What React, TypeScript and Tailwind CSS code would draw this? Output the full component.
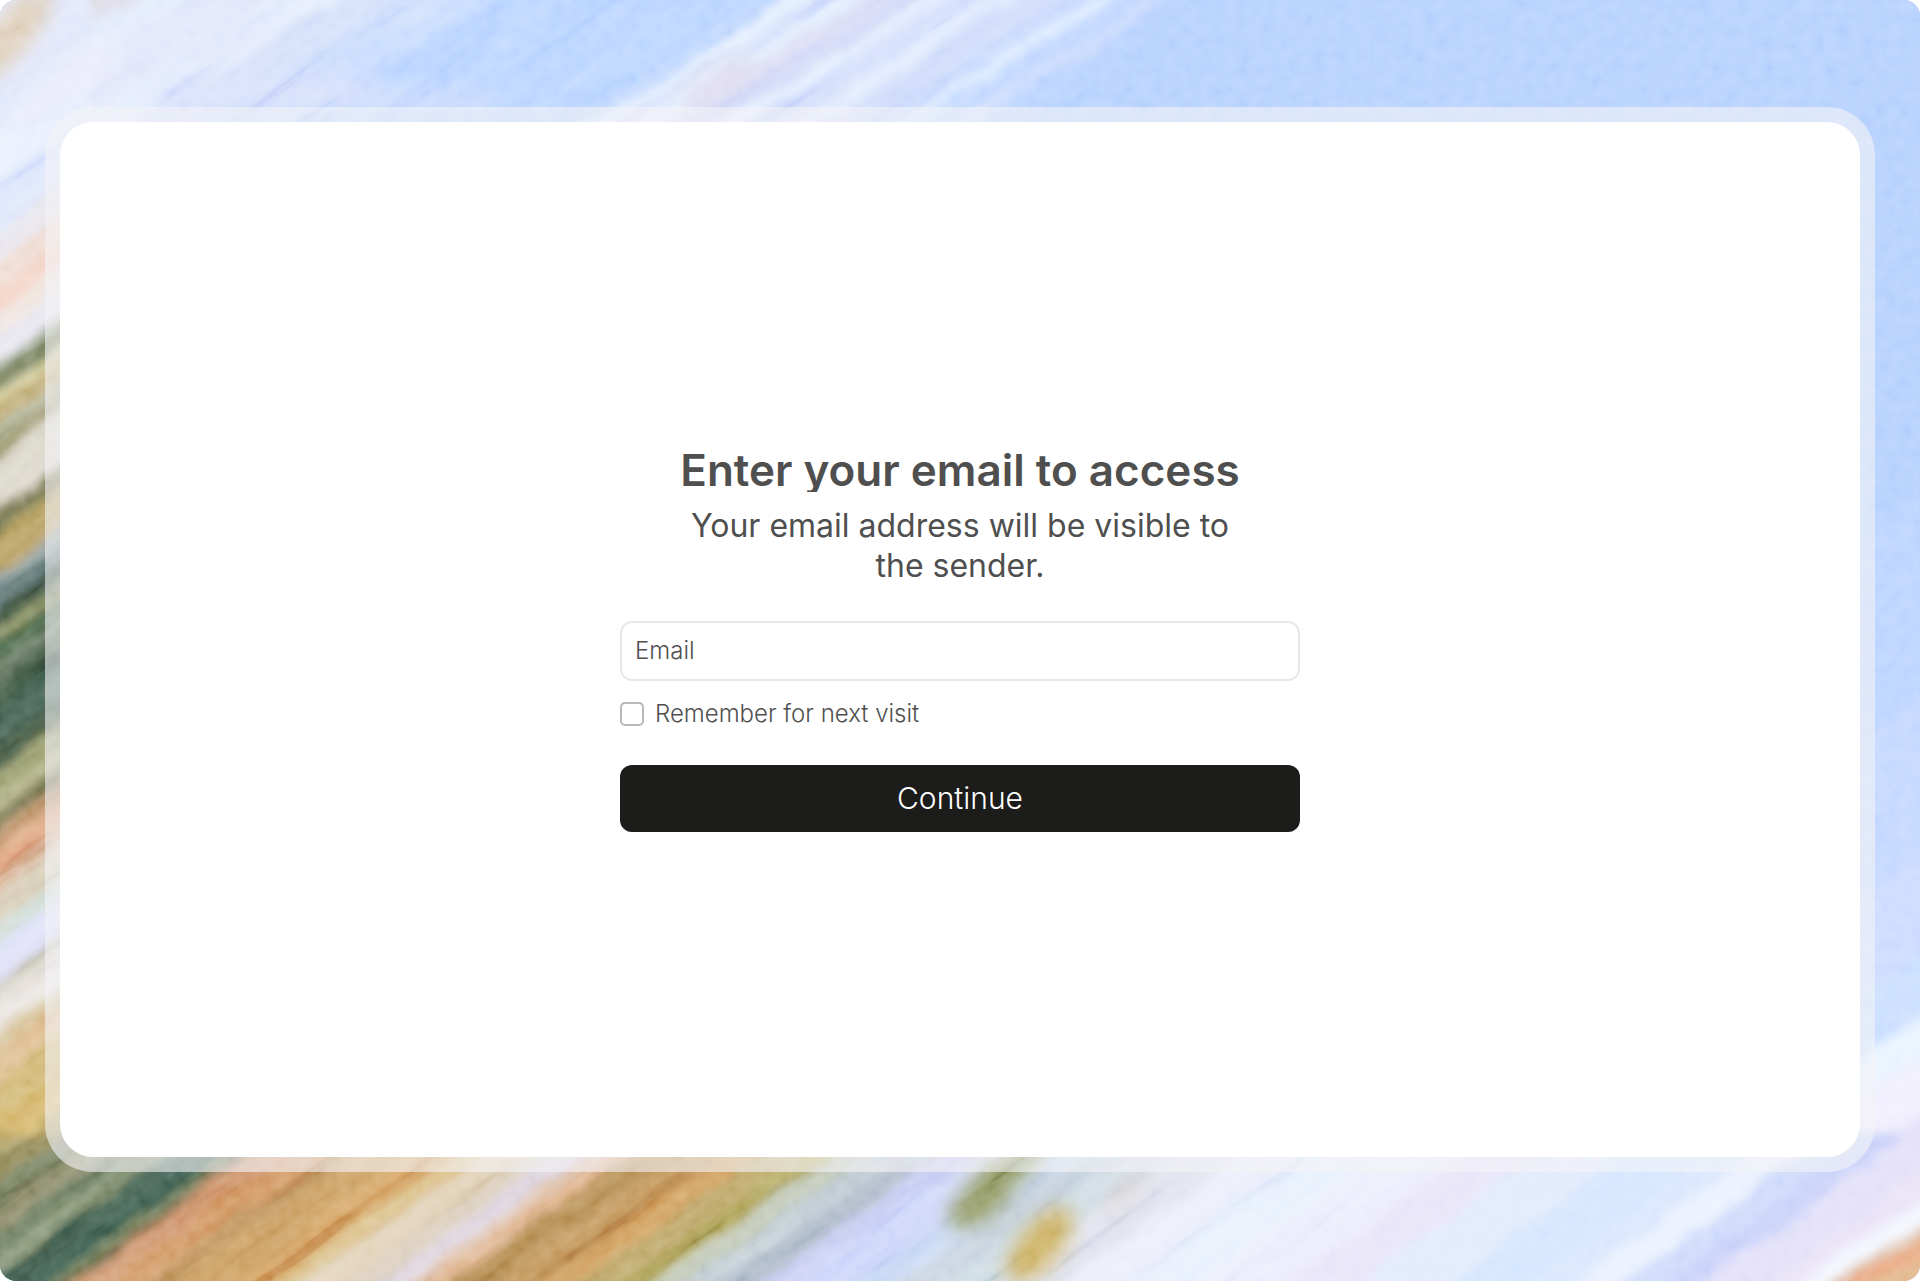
import { useState } from "react";

type Band = [number, string];

/* Each band starts at the given coordinate and runs until the next one */

// y where the band meets the left edge
const leftBands: Band[] = [
  [-40, '#dfe6fc'], [130, '#e8effd'], [180, '#dde6fc'], [230, '#e6e2ea'], [262, '#f0ddd4'],
  [288, '#f2cdbd'], [312, '#efe3de'], [334, '#e6e5ee'], [362, '#939c80'], [374, '#78815c'],
  [390, '#d6cf9b'], [400, '#bfab74'], [424, '#aeb095'], [442, '#958f61'], [454, '#d9d6c6'],
  [480, '#dcd7cb'], [508, '#8f8c66'], [518, '#6c6d45'], [534, '#b39c5a'], [556, '#b89e64'],
  [572, '#8b9c9a'], [586, '#647c7a'], [606, '#3f5540'], [628, '#858c5a'], [642, '#4b694b'],
  [664, '#62755c'], [684, '#466049'], [704, '#375646'], [746, '#42583f'], [769, '#979b6b'],
  [792, '#a8a97c'], [812, '#6b6842'], [830, '#b98d60'], [848, '#dfa27b'], [872, '#ddbba0'],
  [890, '#d9cfba'], [920, '#cfdcd6'], [944, '#dbddf8'], [980, '#c9c7b2'], [994, '#e8e3df'],
  [1034, '#d7c49c'], [1054, '#dcb98a'], [1084, '#cdb26d'], [1116, '#d1b163'], [1154, '#b09d5d'],
  [1184, '#90865a'],
];

// x where the band meets the bottom edge
const bottomBands: Band[] = [
  [-260, '#b39f5c'], [-185, '#938a58'], [-140, '#75805f'], [-105, '#8c8b69'], [-70, '#66775a'],
  [-40, '#7f8d6c'], [-10, '#3a5a4c'], [35, '#2f5345'], [52, '#7e8d63'], [62, '#5f5436'],
  [76, '#cf946c'], [110, '#d0945f'], [150, '#bb8d56'], [180, '#c99a5c'], [235, '#d5a364'],
  [275, '#d9bd84'], [305, '#dfceb4'], [350, '#d8cab8'], [380, '#dcd3df'], [412, '#dfbfa6'],
  [436, '#e5b68e'], [450, '#b2894e'], [500, '#c09256'], [545, '#cd9955'], [580, '#b8a060'],
  [625, '#b0a65a'], [655, '#bfc6b4'], [690, '#bdc9d0'], [725, '#aebac9'], [765, '#c5caf2'],
  [800, '#ccd5fa'], [860, '#c6d7f4'], [905, '#c3cfdd'], [945, '#cddbe3'], [1000, '#dfe2ee'],
  [1070, '#eaecfa'], [1130, '#e6effc'], [1200, '#ecedfc'], [1290, '#e9e5f9'], [1360, '#e2ebfc'],
  [1450, '#d5e6fe'], [1530, '#dae7fe'], [1575, '#ebf1fe'], [1625, '#cfdbfb'], [1665, '#c9d2f9'],
  [1700, '#e3e0fa'], [1770, '#eae3f7'], [1804, '#f3f6fe'], [1838, '#e2c8b4'], [1856, '#eaa781'],
  [1880, '#e3b98f'], [1960, '#e8b9a0'],
];

// x where the band meets the top edge
const topBands: Band[] = [
  [-60, '#e5e2e6'], [0, '#ddc9b4'], [40, '#dccfb9'], [75, '#dddce8'], [110, '#e3edfc'],
  [160, '#dee3fb'], [240, '#e3ebfd'], [310, '#d2def9'], [370, '#cadcfc'], [420, '#c1d8fe'],
  [470, '#b6d2ff'], [742, '#b9d2fd'], [762, '#e4f0ff'], [786, '#cdd8fb'], [802, '#e2edfe'],
  [832, '#d9daf5'], [862, '#cdd4f7'], [894, '#e4eeff'], [915, '#d2ddfc'], [960, '#dfeafe'],
  [990, '#ccd9fb'], [1040, '#c5d8fd'], [1064, '#deebff'], [1084, '#c0d7ff'], [1120, '#cadafd'],
  [1140, '#b7d2fe'], [2200, '#b7d2fe'],
];

// y where the band meets the right edge
const rightBands: Band[] = [
  [-40, '#b6d1fe'], [500, '#bcd4ff'], [700, '#c4d8ff'], [860, '#cedbff'], [950, '#cadfff'],
  [1016, '#e9f3ff'], [1060, '#f1effd'], [1115, '#e7e1fa'], [1164, '#f5f7ff'],
];

function points(bands: Band[], i: number, side: string) {
  const a = bands[i][0];
  const b = (bands[i + 1] ? bands[i + 1][0] : a + 160) + 2;

  switch (side) {
    case 'left':
      return `-40,${a + 30} 90,${a - 68} 90,${b - 68} -40,${b + 30}`;
    case 'right':
      return `1840,${a + 56} 1960,${a - 28} 1960,${b - 28} 1840,${b + 56}`;
    case 'top':
      return `${a + 90},-40 ${a - 214},150 ${b - 214},150 ${b + 90},-40`;
    default:
      return `${a - 54},1320 ${a + 210},1130 ${b + 210},1130 ${b - 54},1320`;
  }
}

function Strokes({ bands, side }: { bands: Band[]; side: string }) {
  return (
    <g>
      {bands.map(([start, color], i) => (
        <polygon key={start} points={points(bands, i, side)} fill={color} />
      ))}
    </g>
  );
}

function Painting() {
  return (
    <svg className="absolute inset-0 h-full w-full" viewBox="0 0 1920 1281" preserveAspectRatio="none" aria-hidden="true">
      <defs>
        <filter id="soft" x="-60" y="-60" width="2040" height="1401" filterUnits="userSpaceOnUse">
          <feTurbulence type="fractalNoise" baseFrequency="0.016" numOctaves="3" seed="4" result="noise" />
          <feDisplacementMap in="SourceGraphic" in2="noise" scale="18" xChannelSelector="R" yChannelSelector="G" />
          <feGaussianBlur stdDeviation="5" />
        </filter>
        <filter id="smudge" x="-50%" y="-50%" width="200%" height="200%">
          <feGaussianBlur stdDeviation="10" />
        </filter>
        <filter id="bristle" x="0" y="0" width="100%" height="100%">
          <feTurbulence type="fractalNoise" baseFrequency="0.006 0.05" numOctaves="4" seed="9" />
          <feColorMatrix values="1.6 0 0 0 -0.34  1.6 0 0 0 -0.34  1.6 0 0 0 -0.34  0 0 0 0 1" />
        </filter>
        <filter id="grain" x="0" y="0" width="100%" height="100%">
          <feTurbulence type="fractalNoise" baseFrequency="0.08" numOctaves="2" seed="2" />
          <feColorMatrix values="1 0 0 0 -0.06  1 0 0 0 -0.06  1 0 0 0 -0.06  0 0 0 0 1" />
          <feGaussianBlur stdDeviation="1" />
        </filter>
        <linearGradient id="fade" x1="0" y1="0" x2="1" y2="0">
          <stop offset="0" stopColor="#fff" />
          <stop offset="0.5" stopColor="#fff" />
          <stop offset="0.6" stopColor="#000" />
        </linearGradient>
        <mask id="bristleArea">
          <rect width="1920" height="1281" fill="url(#fade)" />
          <rect y="1140" width="1920" height="141" fill="#fff" />
        </mask>
      </defs>

      <rect width="1920" height="1281" fill="#b7d2fe" />

      <g filter="url(#soft)">
        <Strokes bands={topBands} side="top" />
        <Strokes bands={rightBands} side="right" />
        <Strokes bands={leftBands} side="left" />
        <Strokes bands={bottomBands} side="bottom" />
      </g>

      <g filter="url(#smudge)">
        <ellipse cx="75" cy="75" rx="80" ry="22" fill="#e7eafa" transform="rotate(-40 75 75)" />
        <ellipse cx="12" cy="34" rx="58" ry="20" fill="#dccab2" transform="rotate(-50 12 34)" />
        <ellipse cx="270" cy="92" rx="120" ry="20" fill="#d6dffb" />
        <ellipse cx="190" cy="35" rx="80" ry="26" fill="#e0e6fc" />
        <ellipse cx="430" cy="100" rx="70" ry="12" fill="#cadafc" />
        <ellipse cx="720" cy="82" rx="44" ry="14" fill="#ddd9ee" transform="rotate(-32 720 82)" />
        <ellipse cx="1008" cy="1168" rx="48" ry="18" fill="#8f9a5f" transform="rotate(-35 1008 1168)" />
        <ellipse cx="982" cy="1200" rx="40" ry="20" fill="#929860" transform="rotate(-40 982 1200)" />
        <ellipse cx="1040" cy="1245" rx="46" ry="20" fill="#c9aa57" transform="rotate(-50 1040 1245)" />
        <ellipse cx="1125" cy="1192" rx="34" ry="9" fill="#d8d0d3" transform="rotate(-45 1125 1192)" />
      </g>

      <g mask="url(#bristleArea)" className="mix-blend-soft-light">
        <rect x="-800" y="-400" width="3200" height="2400" filter="url(#bristle)" opacity="0.4" transform="rotate(-35 0 1281)" />
      </g>
      <rect width="1920" height="1281" filter="url(#grain)" opacity="0.4" className="mix-blend-soft-light" />
    </svg>
  );
}

export default function App() {
  const [email, setEmail] = useState('');
  const [remember, setRemember] = useState(false);

  function handleSubmit(e: React.FormEvent) {
    e.preventDefault();
  }

  return (
    <div className="bg-white font-[Inter,sans-serif]">
      <main className="relative isolate flex min-h-screen overflow-hidden rounded-2xl px-[45px] pt-[107px] pb-[109px]">
        <Painting />

        <div className="relative flex flex-1 rounded-[48px] bg-gray-100/60 p-[15px]">
          <div className="flex flex-1 items-center justify-center rounded-[33px] bg-white p-6">

            <form onSubmit={handleSubmit} className="flex w-full max-w-[680px] flex-col">
              <h1 className="overflow-hidden text-center text-[44px] leading-[44px] font-semibold text-[#4f4f4f]">
                Enter your email to access
              </h1>
              <p className="mt-[14px] px-12 text-center text-[32px] leading-10 text-[#4f4f4f]">
                Your email address will be visible to the sender.
              </p>

              <input type="email" placeholder="Email" aria-label="Email" value={email}
                onChange={e => setEmail(e.target.value)}
                className="mt-[35px] h-[60px] w-full rounded-xl border-2 border-[#e8e8e8] bg-white px-[13px] text-2xl font-light text-[#4f4f4f] placeholder-[#4f4f4f] focus:outline-none" />

              <label className="mt-[17px] flex cursor-pointer items-center gap-[11px] text-2xl font-light text-[#4f4f4f]">
                <input type="checkbox" checked={remember} onChange={e => setRemember(e.target.checked)}
                  className="h-6 w-6 appearance-none rounded-[5px] border-2 border-[#b8b8b8] bg-white checked:bg-[#1c1c1a]" />
                Remember for next visit
              </label>

              <button type="submit"
                className="mt-[35px] h-[67px] cursor-pointer rounded-xl bg-[#1c1c1a] text-[30px] font-light text-white">
                Continue
              </button>
            </form>

          </div>
        </div>
      </main>
    </div>
  );
}
